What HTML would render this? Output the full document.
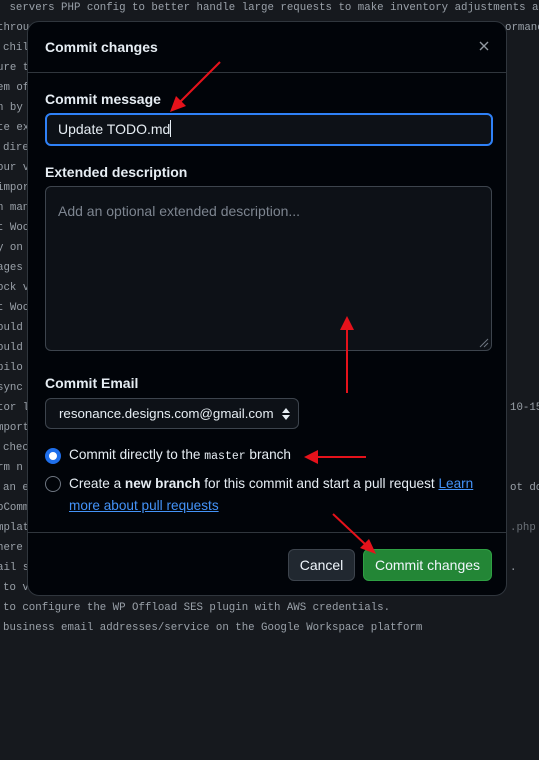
<!DOCTYPE html>
<html><head><style>
body{margin:0;width:539px;height:627px;overflow:hidden;background:#16191e;position:relative;font-family:"Liberation Sans",sans-serif}
.code{position:absolute;left:0;top:0;font-family:"Liberation Mono",monospace;font-size:10.75px;color:#9aa1a9;white-space:pre;line-height:20px}
.l{position:absolute;white-space:pre;height:20px}
.dlg{position:absolute;left:27px;top:21px;width:480px;height:575px;background:#010409;border:1px solid #30363d;border-radius:12px;box-sizing:border-box}
.t{position:absolute;color:#e6edf3;font-weight:bold;font-size:14px}
.hr{position:absolute;left:0;right:0;height:1px;background:#30363d}
.inp{position:absolute;left:17px;top:91px;width:448px;height:33px;border:2px solid #2f81f7;border-radius:6px;background:#0d1117;box-sizing:border-box;color:#e6edf3;font-size:14px;line-height:29px;padding-left:11px}
.ta{position:absolute;left:17px;top:164px;width:447px;height:165px;border:1px solid #3d444d;border-radius:6px;background:#0d1117;box-sizing:border-box;color:#7d8590;font-size:14px;padding:16px 12px}
.sel{position:absolute;left:17px;top:376px;width:254px;height:31px;border:1px solid #3d444d;border-radius:6px;background:#0d1117;box-sizing:border-box;color:#e6edf3;font-size:13.3px;line-height:29px;padding-left:13px}
.rad{position:absolute;width:16px;height:16px;border-radius:50%;box-sizing:border-box}
.txt{position:absolute;color:#e6edf3;font-size:13.6px}
a{color:#4493f8;text-decoration:underline}
.btn{position:absolute;top:527px;height:32px;border-radius:6px;box-sizing:border-box;font-size:14px;line-height:30px;text-align:center;color:#f0f6fc}
</style></head><body>
<div class="code">
<div class="l" style="top:-2px;left:3px"> servers PHP config to better handle large requests to make inventory adjustments a</div>
<div class="l" style="top:18px;left:-3px">throu</div>
<div class="l" style="top:38px;left:3px">chil</div>
<div class="l" style="top:58px;left:-3px">ure t</div>
<div class="l" style="top:78px;left:-3px">em of</div>
<div class="l" style="top:98px;left:-3px">n by</div>
<div class="l" style="top:118px;left:-3px">te ex</div>
<div class="l" style="top:138px;left:3px">dire</div>
<div class="l" style="top:158px;left:-3px">our v</div>
<div class="l" style="top:178px;left:-3px">impor</div>
<div class="l" style="top:198px;left:-3px">n man</div>
<div class="l" style="top:218px;left:-3px">t Woo</div>
<div class="l" style="top:238px;left:-3px">y on</div>
<div class="l" style="top:258px;left:-3px">ages</div>
<div class="l" style="top:278px;left:-3px">ock v</div>
<div class="l" style="top:298px;left:-3px">t Woo</div>
<div class="l" style="top:318px;left:-3px">ould</div>
<div class="l" style="top:338px;left:-3px">ould</div>
<div class="l" style="top:358px;left:-3px">pilo</div>
<div class="l" style="top:378px;left:-3px">sync</div>
<div class="l" style="top:398px;left:-3px">tor l</div>
<div class="l" style="top:418px;left:-3px">mport</div>
<div class="l" style="top:438px;left:3px">chec</div>
<div class="l" style="top:458px;left:-3px">rm n</div>
<div class="l" style="top:478px;left:3px">an e</div>
<div class="l" style="top:498px;left:-3px">oComm</div>
<div class="l" style="top:518px;left:-3px">mplat</div>
<div class="l" style="top:538px;left:-3px">here</div>
<div class="l" style="top:558px;left:-3px">ail s</div>
<div class="l" style="top:578px;left:3px">to v</div>
<div class="l" style="top:598px;left:3px">to configure the WP Offload SES plugin with AWS credentials.</div>
<div class="l" style="top:618px;left:3px">business email addresses/service on the Google Workspace platform</div>
<div class="l" style="top:18px;left:505px">ormance</div>
<div class="l" style="top:398px;left:510px">10-15</div>
<div class="l" style="top:478px;left:510px">ot do</div>
<div class="l" style="top:518px;left:510px;color:#6b7178">.php</div>
<div class="l" style="top:558px;left:510px">.</div>
</div>
<div class="dlg">
<div class="t" style="left:17px;top:17px">Commit changes</div>
<svg style="position:absolute;left:451px;top:19px" width="10" height="10" viewBox="0 0 10 10"><path d="M1 1L9 9M9 1L1 9" stroke="#9198a1" stroke-width="1.4"/></svg>
<div class="hr" style="top:50px"></div>
<div class="t" style="left:17px;top:69px">Commit message</div>
<div class="inp">Update TODO.md<span style="display:inline-block;width:1px;height:17px;background:#e6edf3;vertical-align:-3px"></span></div>
<div class="t" style="left:17px;top:142px">Extended description</div>
<div class="ta">Add an optional extended description...
<svg style="position:absolute;right:2px;bottom:2px" width="12" height="12"><path d="M11 3L3 11M11 7L7 11" stroke="#6e7681"/></svg></div>
<div class="t" style="left:17px;top:353px">Commit Email</div>
<div class="sel">resonance.designs.com@gmail.com<svg style="position:absolute;right:8px;top:9px" width="8" height="12"><path d="M4 0L8 5H0Z M4 12L8 7H0Z" fill="#e6edf3"/></svg></div>
<div class="rad" style="left:17px;top:426px;background:#fff;border:4px solid #1f6feb"></div>
<div class="txt" style="left:41px;top:425px">Commit directly to the <span style="font-family:'Liberation Mono',monospace;font-size:11.5px">master</span> branch</div>
<div class="rad" style="left:17px;top:454px;border:1px solid #6e7681"></div>
<div class="txt" style="left:41px;top:451px;width:420px;line-height:22px">Create a <b>new branch</b> for this commit and start a pull request <a>Learn more about pull requests</a></div>
<div class="hr" style="top:510px"></div>
<div class="btn" style="left:260px;width:67px;background:#212830;border:1px solid #3d444d">Cancel</div>
<div class="btn" style="left:335px;width:129px;background:#238636;border:1px solid #2ea043">Commit changes</div>
</div>
<svg style="position:absolute;left:0;top:0" width="539" height="627">
<g stroke="#e5121b" stroke-width="2" fill="#e5121b">
<line x1="220" y1="62" x2="180" y2="102"/><polygon points="170,112 176,96 186,106" stroke="none"/>
<line x1="347" y1="393" x2="347" y2="328"/><polygon points="347,316 340,330 354,330" stroke="none"/>
<line x1="366" y1="457" x2="318" y2="457"/><polygon points="304,457 318,450 318,464" stroke="none"/>
<line x1="333" y1="514" x2="366" y2="545"/><polygon points="376,554 360,548 369,539" stroke="none"/>
</g></svg>
</body></html>
